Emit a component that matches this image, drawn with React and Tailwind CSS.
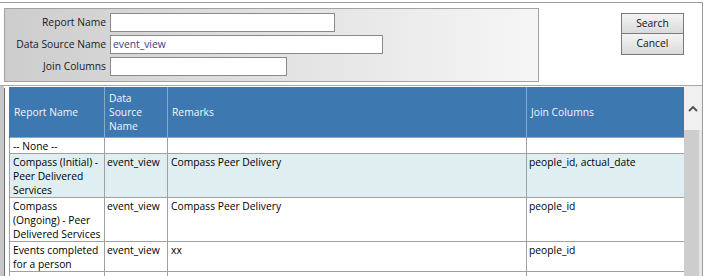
import React from "react";

const rows = [
  { name: ["-- None --"], ds: "", remarks: "", join: "", bg: "bg-white", h: "h-[16px]" },
  { name: ["Compass (Initial) -", "Peer Delivered", "Services"], ds: "event_view", remarks: "Compass Peer Delivery", join: "people_id, actual_date", bg: "bg-[#dfeef0]", h: "h-[44px]" },
  { name: ["Compass", "(Ongoing) - Peer", "Delivered Services"], ds: "event_view", remarks: "Compass Peer Delivery", join: "people_id", bg: "bg-white", h: "h-[44px]" },
  { name: ["Events completed", "for a person"], ds: "event_view", remarks: "xx", join: "people_id", bg: "bg-white", h: "h-[29px]" },
  { name: [""], ds: "", remarks: "", join: "", bg: "bg-white", h: "h-[20px]" },
];

export default function App() {
  const td = "border border-[#a0a0a0] align-top px-[2px] pt-[1px] leading-[14px] text-black whitespace-nowrap";
  const th = "border-l border-r border-[#86a9cc] px-[4px] text-left font-normal leading-[14px] text-[#f2f6fa]";
  return (
    <div className="w-[705px] h-[276px] overflow-hidden bg-white pt-[2px] font-['Open_Sans',sans-serif] text-[10.3px]">
      <div className="w-[703px] h-[300px] border-t border-r border-[#9c9c9c] flex flex-col">
        {/* top area */}
        <div className="flex h-[81px]">
          <div className="ml-[4px] mt-[5px] w-[535px] h-[74px] border border-[#a2a2a2] bg-gradient-to-r from-[#cdcdcd] to-[#f6f6f6] pt-[4px] flex flex-col gap-[3px]">
            {[
              ["Report Name", "", "w-[225px]"],
              ["Data Source Name", "event_view", "w-[273px]"],
              ["Join Columns", "", "w-[177px]"],
            ].map(([label, val, w]) => (
              <div key={label} className="flex items-center h-[19px]">
                <div className="w-[102px] text-right text-[#1a1a1a] pr-[1px]">{label}</div>
                <div className={`ml-[3px] h-[19px] ${w} border border-[#8a8a8a] bg-white px-[2px] leading-[17px] text-[#3a3a8c]`}>{val}</div>
              </div>
            ))}
          </div>
          <div className="ml-[82px] mt-[10px] flex flex-col">
            {["Search", "Cancel"].map((b, i) => (
              <div
                key={b}
                className={`w-[63px] h-[21px] border border-[#7a7a7a] ${i ? "border-t-0 h-[20px]" : ""} bg-gradient-to-b from-[#f4f4f4] to-[#dadada] text-center leading-[19px] text-[#111]`}
              >
                {b}
              </div>
            ))}
          </div>
        </div>
        {/* bottom area */}
        <div className="flex flex-1 border-t border-[#a8a8a8] mt-[1px]">
          <div className="w-[4px] bg-[#c6c6c6]" />
          <div className="w-[5px] bg-white border-l border-[#6e6e6e] mt-[2px]" />
          <div className="w-[675px] mt-[1px]">
            <table className="border-collapse table-fixed w-[675px]">
              <colgroup>
                <col className="w-[95px]" />
                <col className="w-[63px]" />
                <col className="w-[359px]" />
                <col className="w-[158px]" />
              </colgroup>
              <thead>
                <tr className="bg-[#3d78b1] h-[50px]">
                  <th className={th + " border-l-[#3d78b1]"}>Report Name</th>
                  <th className={th}>Data<br />Source<br />Name</th>
                  <th className={th}>Remarks</th>
                  <th className={th + " border-r-[#3d78b1]"}>Join Columns</th>
                </tr>
              </thead>
              <tbody>
                {rows.map((r, i) => (
                  <tr key={i} className={`${r.bg} ${r.h}`}>
                    <td className={td + " px-[3px]"}>
                      {r.name.map((l, j) => (
                        <div key={j}>{l}</div>
                      ))}
                    </td>
                    <td className={td}>{r.ds}</td>
                    <td className={td + " px-[3px]"}>{r.remarks}</td>
                    <td className={td}>{r.join}</td>
                  </tr>
                ))}
              </tbody>
            </table>
          </div>
          <div className="w-[18px] flex flex-col">
            <div className="h-[44px] bg-[#f0f0f0] flex items-center justify-center">
              <svg width="10" height="7" viewBox="0 0 10 7">
                <path d="M1 6 L5 2 L9 6" fill="none" stroke="#505050" strokeWidth="1.8" />
              </svg>
            </div>
            <div className="flex-1 flex">
              <div className="w-[15px] bg-[#cdcdcd]" />
              <div className="flex-1 bg-[#e6e6e6]" />
            </div>
          </div>
        </div>
      </div>
    </div>
  );
}
